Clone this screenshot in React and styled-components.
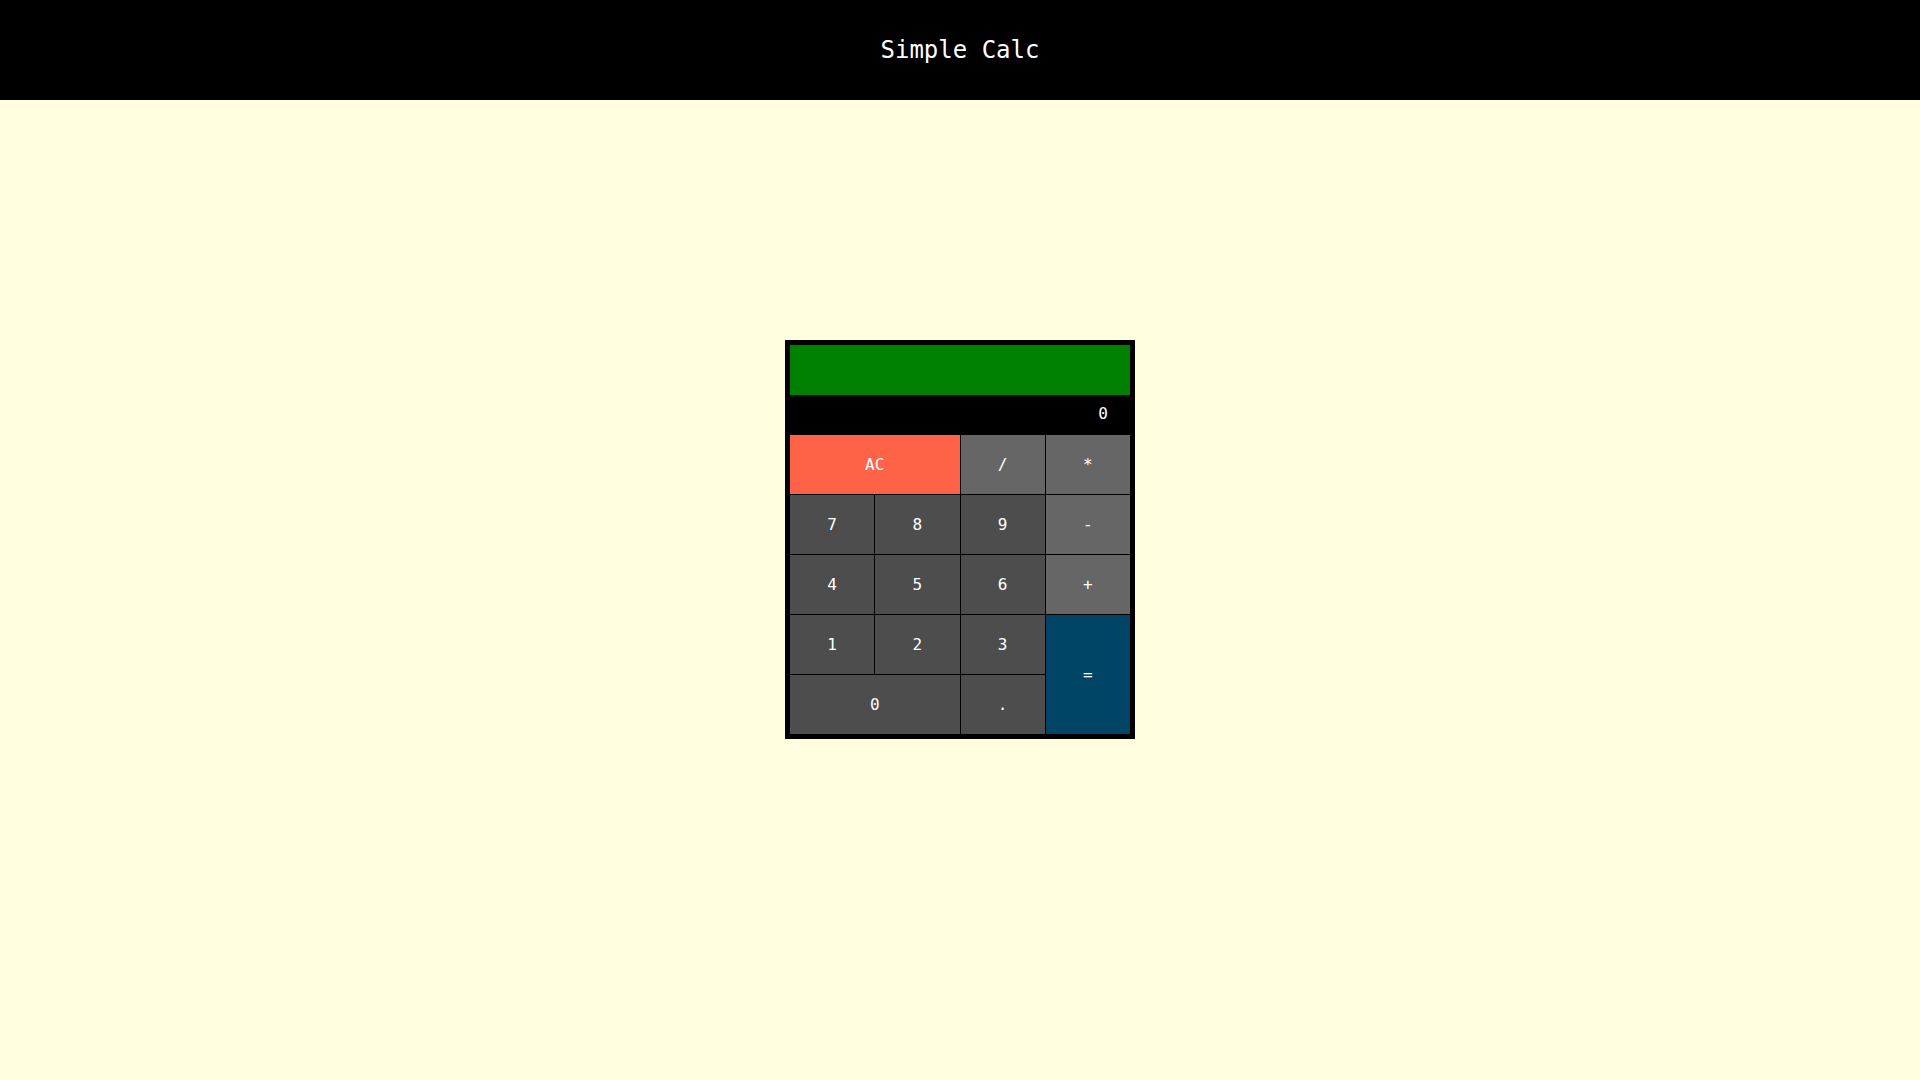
import React from "react";
import styled, { createGlobalStyle } from "styled-components";

const GlobalStyle = createGlobalStyle`
  html, body {
    margin: 0;
    padding: 0;
    background: #ffffe0;
  }
  body {
    font-family: "DejaVu Sans Mono", "Liberation Mono", monospace;
  }
`;

const Header = styled.header`
  height: 100px;
  background: #000;
  color: #fff;
  display: flex;
  align-items: center;
  justify-content: center;
  font-size: 24px;
`;

const Main = styled.main`
  height: 980px;
  display: flex;
  justify-content: center;
  align-items: flex-start;
  padding-top: 240px;
  box-sizing: border-box;
`;

const Calculator = styled.div`
  width: 350px;
  box-sizing: border-box;
  background: #000;
  padding: 5px;
`;

const Formula = styled.div`
  height: 50px;
  background: #008000;
`;

const Output = styled.div`
  height: 40px;
  color: #fff;
  display: flex;
  align-items: center;
  justify-content: flex-end;
  padding: 0 22px 4px 0;
  box-sizing: border-box;
  font-size: 16px;
`;

const Keys = styled.div`
  display: grid;
  grid-template-columns: repeat(4, 1fr);
  grid-template-rows: repeat(5, 59px);
  gap: 1px;
`;

const bg = {
  digit: "#4d4d4d",
  op: "#666666",
  clear: "#ff6347",
  equals: "#004466",
};

const Key = styled.button`
  border: none;
  margin: 0;
  padding: 0;
  color: #fff;
  font-family: inherit;
  font-size: 16px;
  background: ${(p) => bg[p.$kind]};
  grid-column: span ${(p) => p.$cols || 1};
  grid-row: span ${(p) => p.$rows || 1};
`;

export default function App() {
  return (
    <>
      <GlobalStyle />
      <Header>Simple Calc</Header>
      <Main>
        <Calculator>
          <Formula />
          <Output>0</Output>
          <Keys>
            <Key $kind="clear" $cols={2}>AC</Key>
            <Key $kind="op">/</Key>
            <Key $kind="op">*</Key>
            <Key $kind="digit">7</Key>
            <Key $kind="digit">8</Key>
            <Key $kind="digit">9</Key>
            <Key $kind="op">-</Key>
            <Key $kind="digit">4</Key>
            <Key $kind="digit">5</Key>
            <Key $kind="digit">6</Key>
            <Key $kind="op">+</Key>
            <Key $kind="digit">1</Key>
            <Key $kind="digit">2</Key>
            <Key $kind="digit">3</Key>
            <Key $kind="equals" $rows={2}>=</Key>
            <Key $kind="digit" $cols={2}>0</Key>
            <Key $kind="digit">.</Key>
          </Keys>
        </Calculator>
      </Main>
    </>
  );
}
